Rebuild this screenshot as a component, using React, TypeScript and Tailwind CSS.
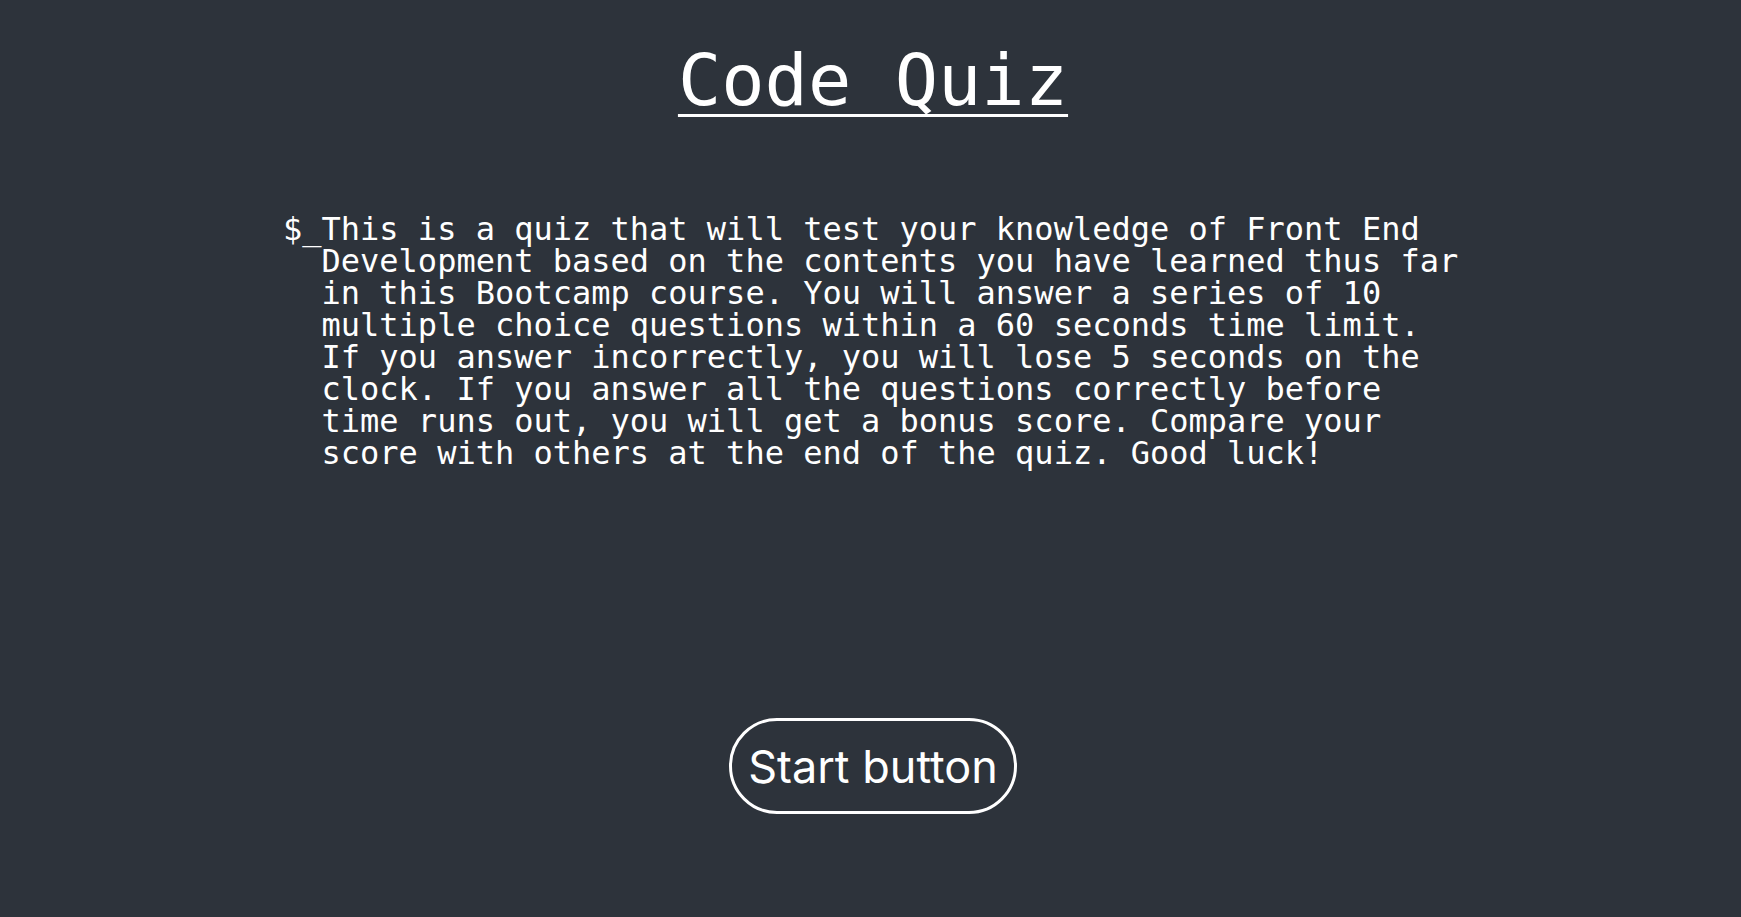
export default function App() {
  const mono = { fontFamily: '"DejaVu Sans Mono", "Liberation Mono", monospace' };
  return (
    <div className="min-h-screen w-full bg-[#2d333b] text-white flex flex-col items-center pl-[5px]">
      <h1
        className="mt-[44px] text-[72px] leading-none font-normal underline decoration-[3px] underline-offset-[9px]"
        style={mono}
      >
        Code Quiz
      </h1>
      <div className="mt-[97px] w-[1180px] flex text-[32px] leading-[32px]" style={mono}>
        <span className="shrink-0">$_</span>
        <p className="flex-1">
          This is a quiz that will test your knowledge of Front End Development based on the contents you have
          learned thus far in this Bootcamp course. You will answer a series of 10 multiple choice questions within
          a 60 seconds time limit. If you answer incorrectly, you will lose 5 seconds on the clock. If you answer all
          the questions correctly before time runs out, you will get a bonus score. Compare your score with others at
          the end of the quiz. Good luck!
        </p>
      </div>
      <button
        className="mt-[249px] h-[96px] px-[16px] rounded-full border-[3px] border-white text-white text-[45px] leading-none flex items-center justify-center"
        style={{ fontFamily: 'Inter, "Noto Sans", sans-serif' }}
      >
        Start button
      </button>
    </div>
  );
}
